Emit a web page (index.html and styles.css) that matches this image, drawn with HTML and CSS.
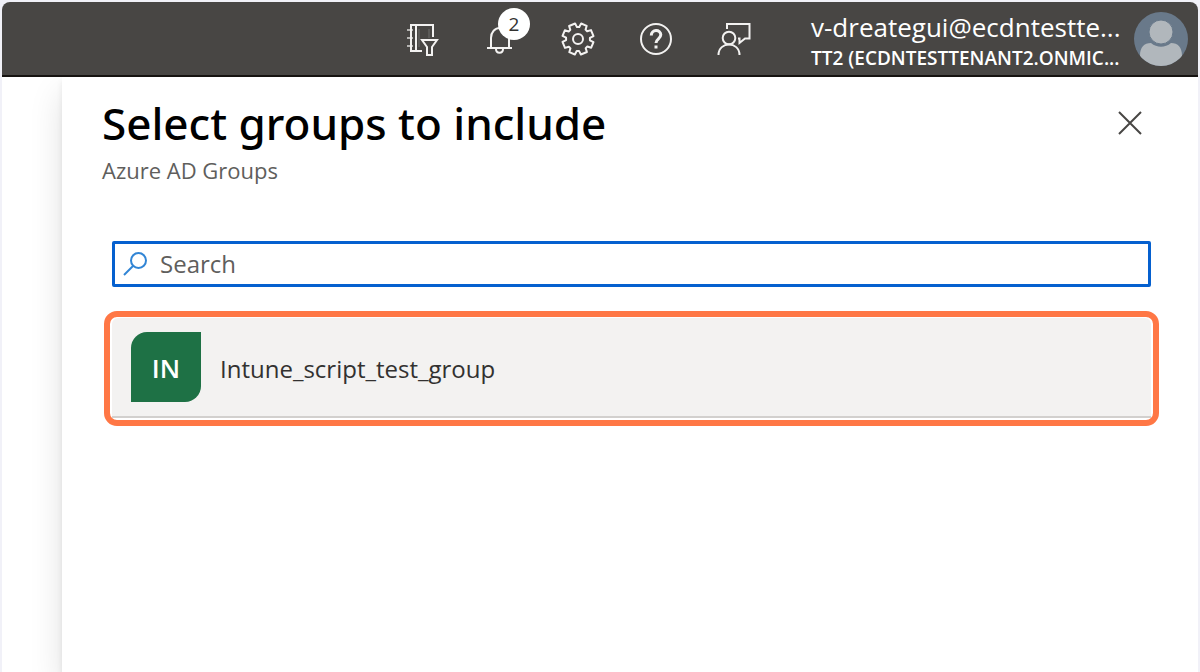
FILE: index.html
```html
<!DOCTYPE html>
<html lang="en">
<head>
<meta charset="utf-8">
<meta name="viewport" content="width=device-width, initial-scale=1">
<title>Select groups to include</title>
<link rel="stylesheet" href="styles.css">
</head>
<body>
<div class="window">
  <header class="topbar">
    <nav class="tools" aria-label="Portal tools">
      <button class="tool" type="button" aria-label="Directories and subscriptions">
        <svg class="tool-icon" viewBox="0 0 36 36">
          <path d="M7 3v28M3 9h6M3 17h6M3 25h6" stroke="#b5b4b2"/>
          <path d="M18 30H7V4h22v12M12 4v26"/>
          <path d="M25 8v9M15 8v18" stroke="#6f6e6c" stroke-width="1"/>
          <path d="M18 19h15l-5 7v8h-5v-8z"/>
        </svg>
      </button>
      <button class="tool" type="button" aria-label="Notifications">
        <svg class="tool-icon" viewBox="0 0 36 36">
          <path d="M9 27V17c0-6 4-10 9-10s9 4 9 10v10M5 27h25M14 28c0 5 7 5 7 0"/>
        </svg>
        <span class="count">2</span>
      </button>
      <button class="tool" type="button" aria-label="Settings">
        <svg class="tool-icon" viewBox="-18 -18 36 36">
          <path transform="rotate(22.5)" stroke-linejoin="round" d="M-3-15.500h6l.4 4 2.100.9 3.100-2.600 4.600 4.600-2.600 3.100.9 2.100 4 .4v6l-4 .4-.9 2.100 2.600 3.100-4.600 4.600-3.100-2.600-2.100.9-.4 4h-6l-.4-4-2.100-.9-3.100 2.600-4.600-4.600 2.600-3.100-.9-2.100-4-.4v-6l4-.4.9-2.100-2.600-3.100 4.600-4.600 3.100 2.600 2.100-.9z"/>
          <circle cx="0" cy="0" r="5"/>
        </svg>
      </button>
      <button class="tool" type="button" aria-label="Help">
        <svg class="tool-icon" viewBox="0 0 36 36">
          <circle cx="18" cy="18" r="15"/>
          <path d="M13.300 14.500c0-6.500 9.500-6.500 9.500-.7 0 4-4.800 4-4.800 8.200" stroke-width="3"/>
          <path d="M18 24.500v3" stroke-width="3"/>
        </svg>
      </button>
      <button class="tool" type="button" aria-label="Feedback">
        <svg class="tool-icon" viewBox="0 0 36 36">
          <circle cx="13" cy="17" r="6.300"/>
          <path d="M2.500 34c0-14 21-14 21 0M11 8V3h22.500v14.500H29L23.500 22v-4.500H22"/>
        </svg>
      </button>
    </nav>
    <div class="account">
      <div class="identity">
        <div class="user">v-dreategui@ecdntestte...</div>
        <div class="tenant">TT2 (ECDNTESTTENANT2.ONMIC...</div>
      </div>
      <svg class="avatar" viewBox="0 0 54 54" role="img" aria-label="Profile">
        <defs><clipPath id="disc"><circle cx="27" cy="27" r="27"/></clipPath></defs>
        <g clip-path="url(#disc)">
          <path fill="#69798a" d="M0 0h54v54H0z"/>
          <path fill="#b1b7bc" d="M6 44c0-9 4-13 11-13 6 5 14 5 20 0 7 0 11 4 11 13v10H6z"/>
          <circle cx="27" cy="20" r="12" fill="#b1b7bc" stroke="#69798a" stroke-width="1"/>
        </g>
      </svg>
    </div>
  </header>
  <main class="workspace">
    <section class="panel" aria-labelledby="panel-title">
      <div class="heading">
        <div>
          <h1 class="title" id="panel-title">Select groups to include</h1>
          <p class="subtitle">Azure AD Groups</p>
        </div>
        <button class="close" type="button" aria-label="Close">
          <svg class="close-icon" viewBox="0 0 24 24"><path d="M1 1l22 22M23 1L1 23"/></svg>
        </button>
      </div>
      <label class="search">
        <svg class="search-icon" viewBox="0 0 26 26"><circle cx="16.500" cy="9.500" r="7.500"/><path d="M11 15L2 24"/></svg>
        <input class="search-input" type="text" placeholder="Search" aria-label="Search">
      </label>
      <div class="highlight">
        <button class="group" type="button">
          <span class="badge">IN</span>
          <span class="name">Intune_script_test_group</span>
        </button>
      </div>
    </section>
  </main>
</div>
</body>
</html>
```
FILE: styles.css
```css
* { box-sizing: border-box; }
body {
  margin: 0;
  background: #f1f1f8;
  font-family: "Open Sans", "Noto Sans", sans-serif;
  color: #323130;
}
button, input { font: inherit; color: inherit; }
button { border: 0; padding: 0; background: none; cursor: pointer; }
.window {
  display: flex;
  flex-direction: column;
  min-height: 100vh;
  padding: 2px 2px 0;
}
.topbar {
  display: flex;
  align-items: center;
  justify-content: flex-end;
  gap: 38px;
  height: 75px;
  padding-right: 10px;
  background: #484644;
  border-bottom: 2px solid #161311;
  border-radius: 8px 8px 0 0;
  color: #fff;
}
.tools { display: flex; }
.tool {
  position: relative;
  display: flex;
  align-items: center;
  justify-content: center;
  width: 78px;
  height: 72px;
}
.tool-icon {
  width: 36px;
  height: 36px;
  fill: none;
  stroke: #f3f2f1;
  stroke-width: 2;
}
.count {
  position: absolute;
  top: 5px;
  left: 37px;
  width: 32px;
  height: 32px;
  border-radius: 50%;
  background: #fff;
  color: #323130;
  font-size: 19px;
  line-height: 32px;
  text-align: center;
}
.account { display: flex; align-items: center; gap: 11px; }
.identity { width: 312px; padding-top: 4px; white-space: nowrap; }
.user { font-size: 26px; line-height: 34px; }
.tenant { font-size: 19px; line-height: 28px; font-weight: 600; }
.avatar { width: 54px; height: 54px; }
.workspace {
  display: flex;
  flex: 1;
  padding-left: 60px;
  background: #fff;
  overflow: hidden;
}
.panel {
  flex: 1;
  padding: 16px 40px 40px;
  background: #fff;
  box-shadow: 0 16px 32px rgba(0, 0, 0, .12), 0 4px 6px rgba(0, 0, 0, .08);
}
.heading { display: flex; justify-content: space-between; align-items: flex-start; }
.title { margin: 0; font-family: "Noto Sans", "Open Sans", sans-serif; font-size: 44px; line-height: 60px; font-weight: 500; color: #000; }
.subtitle { margin: 0; font-size: 22px; line-height: 34px; color: #605e5c; }
.close { display: flex; margin: 14px 12px 0 0; padding: 4px; }
.close-icon { width: 24px; height: 24px; fill: none; stroke: #484644; stroke-width: 2; }
.search {
  display: flex;
  align-items: center;
  gap: 12px;
  height: 46px;
  margin: 54px 7px 0 10px;
  padding: 0 7px;
  border: 3px solid #0560cf;
  border-radius: 2px;
}
.search-icon { width: 26px; height: 26px; fill: none; stroke: #3185d5; stroke-width: 2; }
.search-input {
  flex: 1;
  min-width: 0;
  padding: 0;
  border: 0;
  outline: 0;
  background: transparent;
  font-size: 24px;
  line-height: 32px;
}
.search-input::placeholder { color: #605e5c; opacity: 1; }
.highlight {
  margin: 24px -1px 0 2px;
  padding: 1px 2px 2px;
  border: 6px solid #ff7745;
  border-radius: 13px;
}
.group {
  display: flex;
  align-items: center;
  gap: 19px;
  width: 100%;
  height: 100px;
  padding: 0 19px;
  background: #f3f2f1;
  border-bottom: 2px solid #d2d0ce;
  border-radius: 6px 6px 0 0;
}
.badge {
  width: 70px;
  height: 70px;
  border-radius: 16px 0;
  background: #1e7145;
  color: #fff;
  font-size: 26px;
  line-height: 72px;
  font-weight: 600;
  text-align: center;
}
.name { padding-top: 4px; font-size: 24px; line-height: 34px; }
```
